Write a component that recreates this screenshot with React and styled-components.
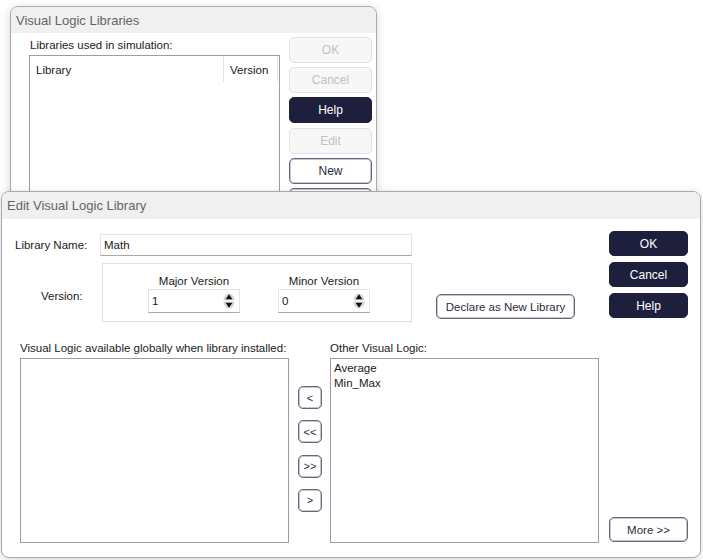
import React from 'react';
import styled, { createGlobalStyle } from 'styled-components';

const Global = createGlobalStyle`
    body {
        margin: 0;
        background: #ffffff;
        font-family: "Liberation Sans", Arial, sans-serif;
        color: #1a1a1a;
    }
`;

const Desktop = styled.div`
    position: relative;
    width: 703px;
    height: 560px;
    overflow: hidden;
    background: #ffffff;
`;

// windows sit on a free desktop, so they are placed by coordinates
const Window = styled.section`
    position: absolute;
    left: ${p => p.$x}px;
    top: ${p => p.$y}px;
    width: ${p => p.$w}px;
    height: ${p => p.$h}px;
    box-sizing: border-box;
    display: flex;
    flex-direction: column;
    background: #ffffff;
    border: 1px solid #a9a9ad;
    border-radius: 8px;
    overflow: hidden;
    box-shadow: 0 2px 10px rgba(0, 0, 0, 0.16);
`;

const TitleBar = styled.header`
    flex: none;
    height: ${p => p.$h}px;
    display: flex;
    align-items: center;
    padding-left: 5px;
    background: #f0f0f0;
    color: #646464;
    font-size: 13px;
`;

const Button = styled.button`
    box-sizing: border-box;
    width: ${p => p.$w || 83}px;
    height: ${p => p.$h || 26}px;
    padding: 0;
    border-radius: 5px;
    font-family: "Liberation Sans", Arial, sans-serif;
    font-size: ${p => p.$fs || 12}px;
    cursor: default;
    ${p => p.$variant === 'primary' && `
        background: #1d1f3d;
        border: 1px solid #1d1f3d;
        color: #ffffff;
    `}
    ${p => p.$variant === 'outline' && `
        background: #ffffff;
        border: 1px solid #66667c;
        box-shadow: inset 0 0 0 1px #c6c6d0;
        color: #2b2b40;
    `}
    ${p => p.$variant === 'disabled' && `
        background: #f7f7f7;
        border: 1px solid #e1e1e3;
        color: #c2c2c2;
    `}
`;

const Label = styled.div`
    font-size: 11.5px;
    line-height: 14px;
    white-space: nowrap;
`;

/* ---------- back window ---------- */

const BackBody = styled.div`
    flex: 1;
    display: flex;
    gap: 9px;
    padding: 4px 4px 0 18px;
`;

const BackLeft = styled.div`
    flex: 1;
    display: flex;
    flex-direction: column;
    padding: 1px 0 0 1px;
`;

const ListBox = styled.div`
    box-sizing: border-box;
    margin-top: 3px;
    height: ${p => p.$h}px;
    border: 1px solid #9c9ca6;
    background: #ffffff;
    padding: ${p => p.$pad || '0'};
`;

const BackList = styled(ListBox)`
    margin-left: -1px;
`;

const HeaderRow = styled.div`
    display: grid;
    grid-template-columns: 1fr 54px 2px;
    height: 26px;
    font-size: 11.5px;
    line-height: 14px;
`;

const HeaderCell = styled.div`
    padding: 7px 0 0 6px;
    border-left: ${p => (p.$sep ? '1px solid #e4e4e4' : 'none')};
    &:last-child {
        padding: 0;
    }
`;

const ButtonColumn = styled.div`
    display: flex;
    flex-direction: column;
    gap: ${p => p.$gap}px;
`;

/* ---------- front window ---------- */

const FrontBody = styled.div`
    flex: 1;
    display: flex;
`;

const FrontMain = styled.div`
    flex: 1;
    display: flex;
    flex-direction: column;
    padding: 15px 0 14px 13px;
`;

const NameRow = styled.div`
    display: flex;
    align-items: center;
`;

const RowLabel = styled(Label)`
    width: ${p => p.$w}px;
    padding-left: ${p => p.$indent || 0}px;
    padding-top: ${p => p.$top || 0}px;
    box-sizing: border-box;
`;

const TextBox = styled.div`
    box-sizing: border-box;
    width: ${p => p.$w}px;
    height: ${p => p.$h}px;
    display: flex;
    align-items: center;
    padding: 0 4px 0 3px;
    border: 1px solid #e2e2e2;
    border-bottom-color: #a9a9a9;
    background: #ffffff;
    font-size: 11.5px;
`;

const VersionRow = styled.div`
    display: flex;
    align-items: center;
    margin-top: 7px;
`;

const VersionBox = styled.div`
    box-sizing: border-box;
    width: 310px;
    height: 59px;
    border: 1px solid #dedede;
    padding: 10px 0 0 45px;
    display: grid;
    grid-template-columns: 92px 92px;
    column-gap: 38px;
`;

const SpinField = styled.div`
    display: flex;
    flex-direction: column;
    align-items: center;
    gap: 1px;
`;

const SpinText = styled.span`
    flex: 1;
`;

const DeclareWrap = styled.div`
    align-self: flex-end;
    margin: 0 0 3px 24px;
`;

const TransferSection = styled.div`
    display: flex;
    margin-top: 19px;
    padding-left: 5px;
`;

const ListColumn = styled.div`
    display: flex;
    flex-direction: column;
    width: 269px;
`;

const ArrowColumn = styled(ButtonColumn)`
    margin: 0 8px 0 9px;
    padding-top: 45px;
`;

const ListItem = styled.div`
    font-size: 11.5px;
    line-height: 15px;
`;

const SideColumn = styled.div`
    width: 79px;
    display: flex;
    flex-direction: column;
    gap: 6px;
    margin-left: 8px;
    padding: 12px 12px 15px 0;
`;

const MoreWrap = styled.div`
    margin-top: auto;
`;

function SpinArrows() {
    return (
        <svg width="12" height="20" viewBox="0 0 12 20">
            <ellipse cx="6" cy="10" rx="5.6" ry="7.6" fill="#d6d6d6" />
            <rect x="0" y="9.4" width="12" height="1.2" fill="#ffffff" />
            <path d="M2.6 8.2 L6 3.2 L9.4 8.2 Z" fill="#111" />
            <path d="M2.6 11.8 L9.4 11.8 L6 16.8 Z" fill="#111" />
        </svg>
    );
}

function Spinner({ label, value }) {
    return (
        <SpinField>
            <Label>{label}</Label>
            <TextBox $w={92} $h={24}>
                <SpinText>{value}</SpinText>
                <SpinArrows />
            </TextBox>
        </SpinField>
    );
}

export default function App() {
    return (
        <Desktop>
            <Global />

            <Window $x={10} $y={6} $w={367} $h={260}>
                <TitleBar $h={26}>Visual Logic Libraries</TitleBar>
                <BackBody>
                    <BackLeft>
                        <Label>Libraries used in simulation:</Label>
                        <BackList $h={200}>
                            <HeaderRow>
                                <HeaderCell>Library</HeaderCell>
                                <HeaderCell $sep>Version</HeaderCell>
                                <HeaderCell $sep />
                            </HeaderRow>
                        </BackList>
                    </BackLeft>
                    <ButtonColumn $gap={4.2}>
                        <Button $variant="disabled">OK</Button>
                        <Button $variant="disabled">Cancel</Button>
                        <Button $variant="primary">Help</Button>
                        <Button $variant="disabled">Edit</Button>
                        <Button $variant="outline">New</Button>
                        <Button $variant="outline">Remove</Button>
                    </ButtonColumn>
                </BackBody>
            </Window>

            <Window $x={1} $y={191} $w={700} $h={367}>
                <TitleBar $h={27}>Edit Visual Logic Library</TitleBar>
                <FrontBody>
                    <FrontMain>
                        <NameRow>
                            <RowLabel $w={85}>Library Name:</RowLabel>
                            <TextBox $w={312} $h={22}>Math</TextBox>
                        </NameRow>
                        <VersionRow>
                            <RowLabel $w={87} $indent={26} $top={7}>Version:</RowLabel>
                            <VersionBox>
                                <Spinner label="Major Version" value="1" />
                                <Spinner label="Minor Version" value="0" />
                            </VersionBox>
                            <DeclareWrap>
                                <Button $variant="outline" $w={139} $h={25} $fs={11.5}>
                                    Declare as New Library
                                </Button>
                            </DeclareWrap>
                        </VersionRow>
                        <TransferSection>
                            <ListColumn>
                                <Label>Visual Logic available globally when library installed:</Label>
                                <ListBox $h={185} />
                            </ListColumn>
                            <ArrowColumn $gap={11.3}>
                                <Button $variant="outline" $w={24} $h={23} $fs={11}>&lt;</Button>
                                <Button $variant="outline" $w={24} $h={23} $fs={11}>&lt;&lt;</Button>
                                <Button $variant="outline" $w={24} $h={23} $fs={11}>&gt;&gt;</Button>
                                <Button $variant="outline" $w={24} $h={23} $fs={11}>&gt;</Button>
                            </ArrowColumn>
                            <ListColumn>
                                <Label>Other Visual Logic:</Label>
                                <ListBox $h={185} $pad="2px 3px">
                                    <ListItem>Average</ListItem>
                                    <ListItem>Min_Max</ListItem>
                                </ListBox>
                            </ListColumn>
                        </TransferSection>
                    </FrontMain>
                    <SideColumn>
                        <Button $variant="primary" $w={79} $h={25}>OK</Button>
                        <Button $variant="primary" $w={79} $h={25}>Cancel</Button>
                        <Button $variant="primary" $w={79} $h={25}>Help</Button>
                        <MoreWrap>
                            <Button $variant="outline" $w={79} $h={25} $fs={11.5}>More &gt;&gt;</Button>
                        </MoreWrap>
                    </SideColumn>
                </FrontBody>
            </Window>
        </Desktop>
    );
}
